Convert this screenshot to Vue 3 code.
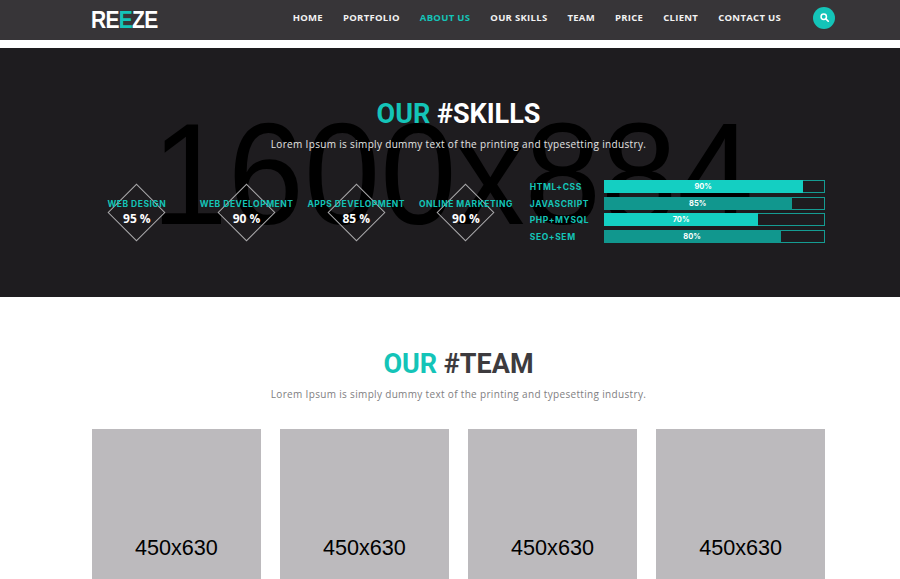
<template>
  <div class="page">
    <header class="topbar">
      <div class="topbar-inner">
        <a class="logo">RE<span class="accent">E</span>ZE</a>
        <nav class="nav">
          <a
            v-for="item in navItems"
            :key="item"
            :class="{ active: item === 'ABOUT US' }"
          >{{ item }}</a>
        </nav>
        <button class="search-btn" aria-label="Search">
          <svg width="9" height="9" viewBox="0 0 12 12">
            <circle cx="5" cy="5" r="3.6" fill="none" stroke="#fff" stroke-width="2" />
            <path d="M7.8 7.8 11 11" stroke="#fff" stroke-width="2.2" stroke-linecap="round" />
          </svg>
        </button>
      </div>
    </header>

    <section class="skills">
      <div class="placeholder-text">1600x884</div>
      <h2 class="section-title"><span class="accent">OUR</span> #SKILLS</h2>
      <p class="section-sub">Lorem Ipsum is simply dummy text of the printing and typesetting industry.</p>
      <div class="skills-row">
        <div class="diamonds">
          <div v-for="d in diamonds" :key="d.label" class="diamond-item">
            <span class="diamond"></span>
            <div class="diamond-label">{{ d.label }}</div>
            <div class="diamond-value">{{ d.value }} %</div>
          </div>
        </div>
        <div class="bars">
          <div v-for="b in bars" :key="b.label" class="bar-row">
            <span class="bar-label">{{ b.label }}</span>
            <div class="bar-track">
              <div class="bar-fill" :class="{ dim: b.dim }" :style="{ width: b.value + '%' }">{{ b.value }}%</div>
            </div>
          </div>
        </div>
      </div>
    </section>

    <section class="team">
      <h2 class="section-title dark"><span class="accent">OUR</span> #TEAM</h2>
      <p class="section-sub muted">Lorem Ipsum is simply dummy text of the printing and typesetting industry.</p>
      <div class="team-grid">
        <div v-for="n in 4" :key="n" class="team-card">450x630</div>
      </div>
    </section>
  </div>
</template>

<script setup>
const navItems = ['HOME', 'PORTFOLIO', 'ABOUT US', 'OUR SKILLS', 'TEAM', 'PRICE', 'CLIENT', 'CONTACT US'];

const diamonds = [
  { label: 'WEB DESIGN', value: 95 },
  { label: 'WEB DEVELOPMENT', value: 90 },
  { label: 'APPS DEVELOPMENT', value: 85 },
  { label: 'ONLINE MARKETING', value: 90 },
];

const bars = [
  { label: 'HTML+CSS', value: 90, dim: false },
  { label: 'JAVASCRIPT', value: 85, dim: true },
  { label: 'PHP+MYSQL', value: 70, dim: false },
  { label: 'SEO+SEM', value: 80, dim: true },
];
</script>

<style>
html,
body {
  margin: 0;
  height: 579px;
  overflow: hidden;
  background: #fff;
}
</style>

<style scoped>
.page {
  font-family: "Open Sans", sans-serif;
}
.accent {
  color: #14c4b8;
}
.topbar {
  height: 40px;
  background: #373538;
}
.topbar-inner {
  height: 35px;
  display: flex;
  align-items: center;
  padding: 0 65px 5px 92px;
}
.logo {
  font-family: "Liberation Sans", sans-serif;
  font-size: 21px;
  font-weight: 700;
  letter-spacing: -0.7px;
  color: #fff;
  margin: 5px 0 0 -1px;
  transform: scaleY(1.13);
}
.nav {
  margin-left: auto;
  display: flex;
  gap: 20px;
}
.nav a {
  font-size: 9.5px;
  font-weight: 700;
  letter-spacing: 0.3px;
  color: #f2f2f2;
}
.nav a.active {
  color: #14c4b8;
}
.search-btn {
  width: 22px;
  height: 22px;
  margin-left: 32px;
  padding: 0;
  border: none;
  border-radius: 50%;
  background: #14c4b8;
  display: flex;
  align-items: center;
  justify-content: center;
}
.skills {
  position: relative;
  margin-top: 8px;
  height: 249px;
  box-sizing: border-box;
  padding-top: 48px;
  background: #1e1c1f;
  overflow: hidden;
}
.placeholder-text {
  position: absolute;
  left: 0;
  right: 0;
  top: 52px;
  text-align: center;
  padding-left: 5px;
  font-family: "Liberation Sans", sans-serif;
  font-size: 137px;
  line-height: 150px;
  color: #000;
  transform: scaleY(1.05);
}
.section-title {
  position: relative;
  margin: 0 75px 0 92px;
  text-align: center;
  font-family: Roboto, sans-serif;
  font-size: 27px;
  font-weight: 700;
  line-height: 36px;
  color: #fff;
}
.section-title.dark {
  color: #3d3b3e;
}
.section-sub {
  position: relative;
  margin: 4px 75px 0 92px;
  text-align: center;
  font-size: 10px;
  line-height: 16px;
  letter-spacing: 0.33px;
  color: #e4e4e4;
}
.section-sub.muted {
  color: #807e81;
}
.skills-row {
  position: relative;
  display: flex;
  margin-top: 28px;
  padding-left: 82px;
}
.diamonds {
  display: grid;
  grid-template-columns: repeat(4, 109.7px);
}
.diamond-item {
  position: relative;
  height: 60px;
  padding-top: 18px;
  box-sizing: border-box;
  text-align: center;
}
.diamond {
  position: absolute;
  left: 50%;
  top: 12px;
  width: 41px;
  height: 41px;
  margin-left: -20.5px;
  border: 1px solid #a9a8aa;
  box-sizing: border-box;
  transform: rotate(45deg);
}
.diamond-label {
  position: relative;
  font-family: Inter, sans-serif;
  font-size: 8.5px;
  font-weight: 700;
  letter-spacing: 0.5px;
  line-height: 12px;
  white-space: nowrap;
  color: #14c4b8;
}
.diamond-value {
  position: relative;
  margin-top: 2px;
  font-size: 12px;
  font-weight: 700;
  line-height: 14px;
  color: #fff;
}
.bars {
  display: flex;
  flex-direction: column;
  gap: 3.67px;
  margin: 0 0 0 9px;
}
.bar-row {
  display: flex;
  align-items: center;
  height: 13px;
}
.bar-label {
  width: 74px;
  padding-top: 1px;
  font-family: Inter, sans-serif;
  font-size: 8.5px;
  font-weight: 700;
  letter-spacing: 0.6px;
  color: #14c4b8;
}
.bar-track {
  width: 221px;
  height: 13px;
  box-shadow: inset 0 0 0 1px #159c92;
}
.bar-fill {
  height: 100%;
  text-align: center;
  font-family: Inter, sans-serif;
  font-size: 7.5px;
  font-weight: 700;
  line-height: 14px;
  color: #fff;
  background: #14cfc2;
}
.bar-fill.dim {
  background: #11978e;
}
.team {
  padding-top: 49px;
}
.team-grid {
  display: grid;
  grid-template-columns: repeat(4, 168.7px);
  gap: 19.4px;
  margin: 27px 0 0 92px;
}
.team-card {
  height: 236px;
  box-sizing: border-box;
  padding-top: 1px;
  display: flex;
  align-items: center;
  justify-content: center;
  background: #bcbabd;
  font-family: "Liberation Sans", sans-serif;
  font-size: 21.6px;
  color: #000;
}
</style>
